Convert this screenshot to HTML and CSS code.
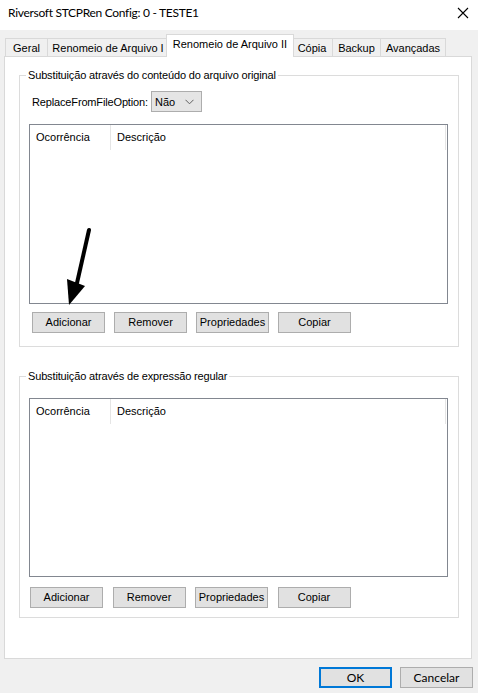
FILE: index.html
```html
<!DOCTYPE html>
<html lang="pt">
<head>
<meta charset="utf-8">
<title>Riversoft STCPRen Config</title>
<link rel="stylesheet" href="styles.css">
</head>
<body>
<div class="window">
  <div class="titlebar">
    <span class="title">Riversoft STCPRen Config: 0 - TESTE1</span>
    <svg class="close" width="12" height="12" viewBox="0 0 12 12"><path d="M1 1 L11 11 M11 1 L1 11" stroke="#000" stroke-width="1.1" fill="none"/></svg>
  </div>

  <div class="tabs">
    <div class="tab t-geral">Geral</div>
    <div class="tab t-ren1">Renomeio de Arquivo I</div>
    <div class="tab t-ren2 active">Renomeio de Arquivo II</div>
    <div class="tab t-copia">Cópia</div>
    <div class="tab t-backup">Backup</div>
    <div class="tab t-avanc">Avançadas</div>
  </div>

  <div class="panel">
    <fieldset class="group g1">
      <legend>Substituição através do conteúdo do arquivo original</legend>
      <div class="option-row">
        <span class="opt-label">ReplaceFromFileOption:</span>
        <div class="combo">
          <span>Não</span>
          <svg class="chev" width="9" height="6" viewBox="0 0 9 6"><path d="M0.5 0.8 L4.5 4.8 L8.5 0.8" stroke="#606060" stroke-width="1" fill="none"/></svg>
        </div>
      </div>
      <div class="listview lv1">
        <div class="lv-header">
          <div class="col c1">Ocorrência</div>
          <div class="col c2">Descrição</div>
        </div>
      </div>
      <div class="btn-row br1">
        <button class="btn">Adicionar</button>
        <button class="btn">Remover</button>
        <button class="btn">Propriedades</button>
        <button class="btn">Copiar</button>
      </div>
    </fieldset>

    <fieldset class="group g2">
      <legend>Substituição através de expressão regular</legend>
      <div class="listview lv2">
        <div class="lv-header">
          <div class="col c1">Ocorrência</div>
          <div class="col c2">Descrição</div>
        </div>
      </div>
      <div class="btn-row br2">
        <button class="btn">Adicionar</button>
        <button class="btn">Remover</button>
        <button class="btn">Propriedades</button>
        <button class="btn">Copiar</button>
      </div>
    </fieldset>
  </div>

  <div class="footer">
    <button class="btn ok">OK</button>
    <button class="btn">Cancelar</button>
  </div>

  <svg class="arrow" width="40" height="90" viewBox="60 220 40 90">
    <line x1="89" y1="230" x2="77" y2="283" stroke="#000" stroke-width="4" stroke-linecap="round"/>
    <polygon points="67,279 85,286 69,305" fill="#000"/>
  </svg>
</div>
</body>
</html>
```

FILE: styles.css
```css
* { box-sizing: border-box; }

html, body {
  margin: 0;
  padding: 0;
}

body {
  background: #f0f0f0;
  font-family: "Liberation Sans", Arial, sans-serif;
  font-size: 11px;
  color: #000;
}

.window {
  position: relative;
  width: 478px;
  height: 693px;
  background: #f0f0f0;
  overflow: hidden;
}

.titlebar {
  height: 30px;
  background: #fff;
  display: flex;
  align-items: flex-start;
  justify-content: space-between;
  padding: 5px 8px 0 8px;
}

.title {
  font-family: Lato, "Liberation Sans", sans-serif;
  font-size: 12px;
  line-height: 16px;
  letter-spacing: -0.3px;
}

.close {
  margin-top: 2px;
  margin-right: 1px;
}

/* tabs */
.tabs {
  display: flex;
  align-items: flex-end;
  margin-top: 4px;
  padding-left: 5px;
  height: 22px;
}

.tab {
  height: 18px;
  border: 1px solid #d9d9d9;
  border-bottom: none;
  margin-left: -1px;
  background: #f0f0f0;
  display: flex;
  align-items: center;
  justify-content: center;
  white-space: nowrap;
  padding-top: 1px;
}

.tab:first-child { margin-left: 0; }

.t-geral { width: 43px; }
.t-ren1 { width: 122px; }
.t-ren2 { width: 128px; }
.t-copia { width: 42px; }
.t-backup { width: 49px; }
.t-avanc { width: 66px; }

.tab.active {
  position: relative;
  z-index: 1;
  height: 23px;
  margin-bottom: -1px;
  margin-left: -3px;
  margin-right: -2px;
  background: #fff;
  padding-top: 0;
  padding-bottom: 4px;
}

.panel {
  margin-left: 4px;
  width: 468px;
  height: 603px;
  border: 1px solid #d9d9d9;
  background: #fff;
  padding: 12px 0 0 14px;
}

/* group boxes */
.group {
  margin: 0;
  width: 440px;
  border: 1px solid #dcdcdc;
  padding: 0 9px;
  min-width: 0;
}

.group legend {
  margin-left: -3px;
  padding: 0 2px;
  font-size: 11px;
  line-height: 13px;
  letter-spacing: -0.15px;
}

.g1 { padding-bottom: 13px; }
.g2 { margin-top: 23px; padding-bottom: 9px; }

.option-row {
  display: flex;
  align-items: center;
  margin-top: 9px;
  padding-left: 3px;
  height: 21px;
}

.opt-label {
  width: 119px;
  letter-spacing: -0.15px;
}

.combo {
  width: 51px;
  height: 21px;
  border: 1px solid #adadad;
  background: #e5e5e5;
  display: flex;
  align-items: center;
  justify-content: space-between;
  padding: 0 7px 0 3px;
}

.chev { display: block; }

/* list view */
.listview {
  width: 419px;
  border: 1px solid #828790;
  background: #fff;
}

.lv1 { margin-top: 12px; height: 180px; }
.lv2 { margin-top: 15px; height: 179px; }

.lv-header {
  display: flex;
  height: 25px;
}

.col {
  display: flex;
  align-items: center;
  padding-left: 6px;
  border-right: 1px solid #e5e5e5;
  padding-bottom: 1px;
}

.c1 { width: 81px; }
.c2 { width: 335px; }

/* buttons */
.btn-row {
  display: flex;
}

.br1 { margin-top: 8px; padding-left: 3px; gap: 9px; }
.br2 { margin-top: 10px; padding-left: 1px; gap: 9.5px; }

.btn {
  width: 73px;
  height: 21px;
  border: 1px solid #adadad;
  background: #e1e1e1;
  font-family: "Liberation Sans", Arial, sans-serif;
  font-size: 11px;
  color: #000;
  padding: 0;
  margin: 0;
  border-radius: 0;
  line-height: 19px;
  text-align: center;
}

.footer {
  display: flex;
  justify-content: flex-end;
  gap: 8px;
  margin-top: 8px;
  padding-right: 5px;
}

.footer .btn {
  width: 73px;
  font-family: Lato, "Liberation Sans", sans-serif;
  font-size: 12px;
}

.btn.ok {
  border: 2px solid #0078d7;
  line-height: 17px;
}

/* annotation arrow overlay */
.arrow {
  position: absolute;
  left: 60px;
  top: 220px;
}
```
